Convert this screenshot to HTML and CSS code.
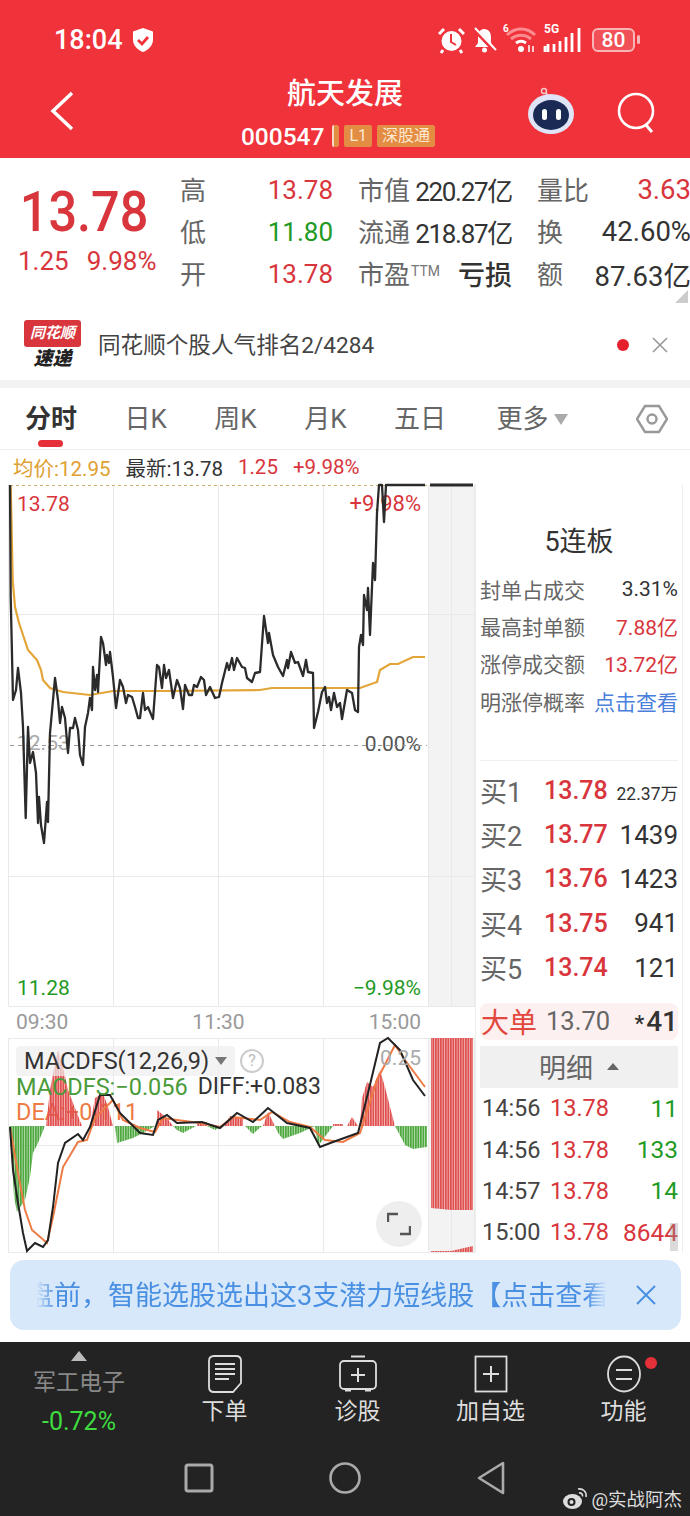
FILE: index.html
```html
<!DOCTYPE html>
<html lang="zh-CN">
<head>
  <meta charset="UTF-8">
  <meta name="viewport" content="width=device-width, initial-scale=1.0">
  <title>航天发展 000547</title>
  <link rel="stylesheet" href="styles.css">
</head>
<body>
<div class="page">

  <header class="header">
    <div class="status">
      <div class="status-left">
        <span class="clock">18:04</span>
        <svg class="shield" viewBox="0 0 24 26"><path d="M12 1l10 3.500v8c0 6-4.500 10.500-10 12.500C6.500 23 2 18.500 2 12.500v-8z" fill="#fff"/><path d="M7 13l4 4 6-7" fill="none" stroke="#f0323a" stroke-width="2.800"/></svg>
      </div>
      <div class="status-right">
        <svg class="st-icon icon-alarm" width="27" height="28" viewBox="0 0 27 28"><circle cx="13.500" cy="15" r="10" fill="#fff"/><path d="M13 8v8l5 3" fill="none" stroke="#f0323a" stroke-width="2"/><path d="M1 8l5-5M26 8l-5-5M5 24l-2 3M22 24l2 3" stroke="#fff" stroke-width="3"/></svg>
        <svg class="st-icon icon-bell" width="25" height="28" viewBox="0 0 25 28"><path d="M12 3c5 0 7 4 7 8v6l3 4H3l3-4v-6c0-4 2-8 6-8z" fill="#fff"/><circle cx="12.500" cy="24" r="2.500" fill="#fff"/><path d="M2 3l21 22" stroke="#f0323a" stroke-width="4"/><path d="M3 2l21 22" stroke="#fff" stroke-width="2"/></svg>
        <span class="wifi">
          <span class="tiny tiny-six">6</span>
          <svg width="32" height="27" viewBox="0 0 32 27"><path d="M2 9c8-8 20-8 28 0M6 13c6-5 14-5 20 0" fill="none" stroke="#fb8d90" stroke-width="3"/><path d="M11 17c3-2 7-2 10 0" fill="none" stroke="#fff" stroke-width="3"/><circle cx="16" cy="23" r="3" fill="#fff"/><path d="M24 19v7M28 20v6" stroke="#fff" stroke-width="1.500"/></svg>
        </span>
        <span class="signal">
          <span class="tiny tiny-5g">5G</span>
          <svg width="40" height="28" viewBox="0 0 40 28"><path d="M2 20v6M5 18v8M11 18v8M17 15v11M23 11v15M29 7v19M36 2v24" stroke="#fff" stroke-width="2.800"/></svg>
        </span>
        <span class="battery">80</span>
        <span class="battery-cap"></span>
      </div>
    </div>

    <div class="nav">
      <svg class="back" viewBox="0 0 26 42"><path d="M23 3L4 21l19 18" fill="none" stroke="#fff" stroke-width="3.500"/></svg>
      <div class="nav-title">
        <div class="stock-name">航天发展</div>
        <div class="stock-code">
          <span class="code">000547</span>
          <span class="tag tag-cut"></span>
          <span class="tag">L1</span>
          <span class="tag">深股通</span>
        </div>
      </div>
      <svg class="robot" viewBox="0 0 48 48"><circle cx="17" cy="4" r="2.500" fill="none" stroke="#f7c5c8" stroke-width="1.500"/><path d="M19 6l3 4" stroke="#f7c5c8" stroke-width="2"/><ellipse cx="24" cy="27" rx="23" ry="20" fill="#dfe4f7"/><ellipse cx="24" cy="28" rx="18" ry="15" fill="#1b2a55"/><rect x="15" y="22" width="5" height="11" rx="2.500" fill="#fff"/><rect x="29" y="22" width="5" height="11" rx="2.500" fill="#fff"/></svg>
      <svg class="search" viewBox="0 0 40 42"><circle cx="19" cy="19" r="17" fill="none" stroke="#fff" stroke-width="2.600"/><path d="M29 33l6 7" stroke="#fff" stroke-width="3"/></svg>
    </div>
  </header>

  <section class="quote">
    <div class="price-box">
      <div class="price">13.78</div>
      <div class="change"><span>1.25</span><span>9.98%</span></div>
    </div>
    <div class="quote-grid">
      <div class="cell"><span class="lbl">高</span><span class="red">13.78</span></div>
      <div class="cell"><span class="lbl">市值</span><span class="dark tight">220.27亿</span></div>
      <div class="cell"><span class="lbl">量比</span><span class="red big">3.63</span></div>
      <div class="cell"><span class="lbl">低</span><span class="green">11.80</span></div>
      <div class="cell"><span class="lbl">流通</span><span class="dark tight">218.87亿</span></div>
      <div class="cell"><span class="lbl">换</span><span class="dark big">42.60%</span></div>
      <div class="cell"><span class="lbl">开</span><span class="red">13.78</span></div>
      <div class="cell"><span class="lbl">市盈<sup class="ttm">TTM</sup></span><span class="dark strong">亏损</span></div>
      <div class="cell"><span class="lbl">额</span><span class="dark big">87.63亿</span></div>
    </div>
    <span class="corner"></span>
  </section>

  <section class="news">
    <div class="news-logo">
      <div class="logo-flag">同花顺</div>
      <div class="logo-sub">速递</div>
    </div>
    <div class="news-text">同花顺个股人气排名2/4284</div>
    <span class="news-dot"></span>
    <svg class="news-close" viewBox="0 0 16 16"><path d="M1 1l14 14M15 1L1 15" stroke="#999" stroke-width="1.600"/></svg>
  </section>

  <nav class="tabs">
    <span class="tab tab-on">分时</span>
    <span class="tab">日K</span>
    <span class="tab">周K</span>
    <span class="tab">月K</span>
    <span class="tab">五日</span>
    <span class="tab tab-more">更多<i class="more-arrow"></i></span>
    <svg class="gear" viewBox="0 0 32 32"><path d="M9 3h14l8 13-8 13H9L1 16z" fill="none" stroke="#999" stroke-width="2.400"/><circle cx="16" cy="16" r="4.500" fill="none" stroke="#999" stroke-width="2.400"/></svg>
  </nav>

  <div class="legend">
    <span class="avg">均价:12.95</span>
    <span class="latest">最新:13.78</span>
    <span class="red">1.25</span>
    <span class="red">+9.98%</span>
  </div>

  <main class="board">
    <div class="charts">
      <div class="chart-top">
        <span class="axis axis-tl red">13.78</span>
        <span class="axis axis-tr red">+9.98%</span>
        <span class="axis axis-ml">12.53</span>
        <span class="axis axis-mr">0.00%</span>
        <span class="axis axis-bl green">11.28</span>
        <span class="axis axis-br green">−9.98%</span>
        <svg class="chart-svg" viewBox="8 484 467 523" width="467" height="523">
          <rect x="429" y="485" width="45" height="521" fill="#f3f3f3"/>
          <path class="grid-line" d="M8.500 485v521M113.500 485v521M218.500 485v521M323.500 485v521M428.500 485v521M451.500 485v521M474.500 485v521M8 614.500h467M8 876.500h467M8 1006.500h467"/>
          <path class="dash-top" d="M10 485.500h420"/>
          <path class="dash-mid" d="M10 745.500h417"/>
          <polyline class="avg-line" points="10.700,485 12.700,580 15,607 19,623 23,635 28,650 37,660 41,670 43,680 50,688 63,692 90,695 113,691 167,691 260,690 272,688 360,688 377,682 380,670 390,664 398,664 413,657 425,657"/>
          <polyline class="price-line" points="10,485 10.700,597 13,700 16,690 18,668 21,693 23,727 25.700,818 28,727 30,763 33,752 36,773 38,823 39,797 41,825 44,843 47,802 48,822 50,733 55,678 58,700 60,723 62,707 65,718 68,753 70,728 73,728 75,718 78,730 80,755 83,765 85,727 88,713 90,698 92,710 93,667 95,690 97,675 98,692 101,637 103,643 106,665 107,655 109,663 110,652 113,677 116,708 120,680 123,687 126,703 128,695 132,697 135,707 138,718 140,718 143,693 145,710 148,707 153,719 157,665 159,667 162,688 164,665 166,678 169,670 173,698 177,680 180,688 183,709 185,685 189,695 192,695 194,685 197,687 201,677 204,680 206,695 210,687 215,698 219,697 222,683 227,663 229,670 232,658 234,670 237,658 242,667 245,668 247,678 252,682 255,673 260,672 264,616 268,643 269,633 273,655 278,667 283,676 287,660 288,668 291,652 295,663 298,662 303,676 306,660 308,672 313,673 314,728 318,712 322,692 325,687 327,703 329,697 331,710 334,693 337,707 340,703 342,719 347,690 352,693 355,710 358,712 359,647 361,635 363,645 364,595 367,610 368,588 370,635 373,563 375,580 377,513 379,485 382,485 384,522 386,485 425,485"/>
          <path class="price-end" d="M430 485h43"/>
        </svg>
      </div>
      <div class="time-axis">
        <span>09:30</span><span>11:30</span><span>15:00</span>
      </div>
      <div class="chart-macd">
        <span class="macd-dea">DEA:+0.111</span>
        <svg class="chart-svg" viewBox="8 1038 467 215" width="467" height="215">
          <defs>
            <pattern id="barsRed" width="2.500" height="10" patternUnits="userSpaceOnUse"><rect width="2" height="10" fill="#e0504f"/></pattern>
            <pattern id="barsGreen" width="2.500" height="10" patternUnits="userSpaceOnUse"><rect width="2" height="10" fill="#4ea83f"/></pattern>
          </defs>
          <rect x="429" y="1038" width="45" height="214" fill="#f3f3f3"/>
          <path class="grid-line" d="M8.500 1038v214M113.500 1038v214M218.500 1038v214M323.500 1038v214M428.500 1038v214M451.500 1038v214M474.500 1038v214M8 1038.500h467M8 1145.500h421M8 1252.500h467"/>
          <path fill="url(#barsGreen)" d="M9 1126H45L38 1143 33 1153 30 1177 25 1200 17 1212 14 1197 12 1163zM115 1126H155L143 1133 133 1138 117 1143zM173 1126H196L183 1133 177 1130zM207 1126H222L215 1130zM245 1126H262L253 1134zM275 1126H315L300 1133 283 1139 278 1133zM315 1126H333L318 1146zM405 1126H395L405 1145 413 1149 427 1147V1126z"/>
          <path fill="url(#barsRed)" d="M46 1126L50 1090 55 1063 58 1050 63 1067 68 1090 75 1108 82 1126zM90 1126L95 1098 103 1093 108 1107 113 1126zM157 1126V1110L167 1118 173 1126zM197 1126V1122H207V1126zM224 1126L230 1116 243 1118 243 1126zM263 1126L268 1112 275 1126zM333 1126H343V1124H333zM347 1126L352 1117 358 1126zM360 1126L362 1098 367 1082 373 1087 380 1070 385 1087 390 1107 395 1126z"/>
          <path fill="url(#barsRed)" d="M431 1038H473V1210L451 1210 431 1208zM431 1252V1251L451 1251 473 1246V1252z"/>
          <polyline class="dea-line" points="10,1127 18,1173 25,1210 32,1230 47,1243 53,1217 63,1167 78,1142 87,1140 95,1118 113,1100 123,1120 140,1128 155,1132 163,1118 177,1120 200,1123 220,1127 233,1117 260,1120 272,1112 290,1122 310,1127 325,1140 343,1142 360,1133 377,1080 395,1045 405,1060 425,1087"/>
          <polyline class="diff-line" points="10,1127 13,1170 18,1203 23,1233 27,1251 35,1243 43,1247 48,1240 53,1207 58,1163 65,1143 78,1134 83,1140 90,1127 100,1095 110,1095 120,1113 140,1133 153,1135 158,1120 167,1115 177,1123 202,1122 220,1128 237,1113 253,1122 268,1108 287,1123 310,1128 320,1147 333,1142 347,1137 358,1133 368,1093 380,1043 388,1038 400,1050 413,1080 425,1096"/>
        </svg>
        <div class="macd-head">
          <span class="macd-title">MACDFS(12,26,9)</span><i class="macd-arrow"></i>
        </div>
        <span class="macd-help">?</span>
        <div class="macd-values"><span class="macd-green">MACDFS:−0.056</span><span class="macd-diff">DIFF:+0.083</span></div>
        <span class="macd-scale">0.25</span>
        <span class="expand">
          <svg width="24" height="24" viewBox="0 0 24 24"><path d="M1 10V2h10M23 14v8H13" fill="none" stroke="#555" stroke-width="2.400"/></svg>
        </span>
      </div>
    </div>

    <aside class="panel">
      <div class="panel-title">5连板</div>
      <div class="stat"><span>封单占成交</span><b class="dark">3.31%</b></div>
      <div class="stat"><span>最高封单额</span><b class="red">7.88亿</b></div>
      <div class="stat"><span>涨停成交额</span><b class="red">13.72亿</b></div>
      <div class="stat"><span>明涨停概率</span><b class="blue">点击查看</b></div>
      <div class="panel-line"></div>
      <div class="buy"><span class="buy-lbl">买1</span><span class="buy-price">13.78</span><span class="buy-small">22.37万</span></div>
      <div class="buy"><span class="buy-lbl">买2</span><span class="buy-price">13.77</span><span class="buy-qty">1439</span></div>
      <div class="buy"><span class="buy-lbl">买3</span><span class="buy-price">13.76</span><span class="buy-qty">1423</span></div>
      <div class="buy"><span class="buy-lbl">买4</span><span class="buy-price">13.75</span><span class="buy-qty">941</span></div>
      <div class="buy"><span class="buy-lbl">买5</span><span class="buy-price">13.74</span><span class="buy-qty">121</span></div>
      <div class="big-order"><span class="big-lbl">大单</span><span class="big-price">13.70</span><span class="big-qty"><small>*</small>41</span></div>
      <div class="detail-head">明细<i class="detail-arrow"></i></div>
      <div class="tick"><span class="tick-time">14:56</span><span class="tick-price">13.78</span><span class="tick-qty green">11</span></div>
      <div class="tick"><span class="tick-time">14:56</span><span class="tick-price">13.78</span><span class="tick-qty green">133</span></div>
      <div class="tick"><span class="tick-time">14:57</span><span class="tick-price">13.78</span><span class="tick-qty green">14</span></div>
      <div class="tick"><span class="tick-time">15:00</span><span class="tick-price">13.78</span><span class="tick-qty red">8644</span></div>
      <span class="scrollbar"></span>
    </aside>
  </main>

  <div class="banner">
    <div class="banner-clip"><div class="banner-text">盘前，智能选股选出这3支潜力短线股【点击查看</div></div>
    <svg class="banner-close" viewBox="0 0 20 20"><path d="M1 1l18 18M19 1L1 19" stroke="#4a90e2" stroke-width="2"/></svg>
  </div>

  <footer class="bottom">
    <div class="toolbar">
      <div class="sector">
        <i class="sector-arrow"></i>
        <div class="sector-name">军工电子</div>
        <div class="sector-pct">-0.72%</div>
      </div>
      <div class="tool">
        <svg width="34" height="38" viewBox="0 0 34 38"><path d="M6 1h22q5 0 5 5v22l-8 9H6q-5 0-5-5V6q0-5 5-5z" fill="none" stroke="#ddd" stroke-width="1.800"/><path d="M7 9h20M7 14h20M7 19h20M7 24h14" stroke="#ddd" stroke-width="1.800"/></svg>
        <span>下单</span>
      </div>
      <div class="tool">
        <svg width="38" height="38" viewBox="0 0 38 38"><path d="M12 1.500h14" stroke="#ddd" stroke-width="2"/><rect x="1" y="6" width="36" height="28" rx="4" fill="none" stroke="#ddd" stroke-width="1.800"/><path d="M19 13v14M12 20h14" stroke="#ddd" stroke-width="2"/><path d="M6 35h6M26 35h6" stroke="#ddd" stroke-width="3"/></svg>
        <span>诊股</span>
      </div>
      <div class="tool">
        <svg width="34" height="38" viewBox="0 0 34 38"><rect x="1.500" y="1.500" width="31" height="35" fill="none" stroke="#ddd" stroke-width="1.800"/><path d="M17 11v16M9 19h16" stroke="#ddd" stroke-width="2"/></svg>
        <span>加自选</span>
      </div>
      <div class="tool">
        <svg width="36" height="38" viewBox="0 0 36 38"><ellipse cx="18" cy="19" rx="16" ry="17.500" fill="none" stroke="#ddd" stroke-width="1.800"/><path d="M10 15h16M10 24h16" stroke="#ddd" stroke-width="1.800"/></svg>
        <span>功能</span>
        <i class="tool-dot"></i>
      </div>
    </div>
    <div class="sys-nav">
      <svg width="30" height="30" viewBox="0 0 30 30"><rect x="2" y="2" width="26" height="26" rx="2" fill="none" stroke="#aaa" stroke-width="3"/></svg>
      <svg width="32" height="32" viewBox="0 0 32 32"><circle cx="16" cy="16" r="14.500" fill="none" stroke="#aaa" stroke-width="2.600"/></svg>
      <svg width="30" height="34" viewBox="0 0 30 34"><path d="M27 2v30L3 17z" fill="none" stroke="#aaa" stroke-width="2.600" stroke-linejoin="round"/></svg>
    </div>
    <div class="watermark">
      <svg width="27" height="24" viewBox="0 0 27 24"><ellipse cx="10.500" cy="15.500" rx="9.500" ry="7.500" fill="#ddd"/><circle cx="9.500" cy="16" r="4" fill="#232323"/><circle cx="9.500" cy="16" r="2" fill="#ddd"/><path d="M16 3c5-1 9 3 8 8M17 7c2-.500 4 1 3.500 3.500" fill="none" stroke="#ddd" stroke-width="1.600"/></svg>
      <span>@实战阿杰</span>
    </div>
  </footer>

</div>
</body>
</html>
```

FILE: styles.css
```css
* {
  box-sizing: border-box;
}

html, body {
  margin: 0;
  padding: 0;
  background: #fff;
}

.page {
  position: relative;
  width: 690px;
  height: 1516px;
  overflow: hidden;
  font-family: Roboto, "Noto Sans CJK SC", sans-serif;
  color: #333;
}

.red { color: #d8353c; }
.green { color: #1f9a24; }
.dark { color: #333; }
.blue { color: #4a7fdc; }

/* header */
.header {
  height: 158px;
  background: #f0323a;
  color: #fff;
}

.status {
  display: flex;
  justify-content: space-between;
  align-items: center;
  height: 70px;
  padding: 9px 50px 0 54px;
}

.status-left {
  display: flex;
  align-items: center;
  gap: 8px;
}

.clock {
  font-size: 27px;
  font-weight: 500;
}

.shield {
  width: 24px;
  height: 26px;
}

.status-right {
  display: flex;
  align-items: center;
}

.icon-alarm { margin-right: 7px; }
.icon-bell { margin-right: 8px; }

.wifi, .signal {
  position: relative;
  display: flex;
}

.wifi { margin-right: 6px; }
.signal { margin-right: 9px; }

.tiny {
  position: absolute;
  top: -3px;
  left: -2px;
  font-size: 10px;
  font-weight: 700;
  line-height: 12px;
}

.tiny-5g {
  top: -3px;
  left: 1px;
  font-size: 12px;
}

.battery {
  display: block;
  width: 43px;
  height: 24px;
  border: 2px solid #f9b6b9;
  border-radius: 6px;
  background: rgba(255, 255, 255, 0.15);
  font-size: 21px;
  font-weight: 500;
  line-height: 20px;
  text-align: center;
}

.battery-cap {
  display: block;
  width: 3px;
  height: 9px;
  margin-left: 2px;
  background: #f9b6b9;
  border-radius: 2px;
}

.nav {
  position: relative;
  display: flex;
  justify-content: center;
  height: 88px;
}

.nav-title {
  text-align: center;
}

.stock-name {
  height: 46px;
  padding-top: 1px;
  font-size: 29px;
  font-weight: 500;
  line-height: 46px;
}

.stock-code {
  display: flex;
  align-items: center;
  gap: 5px;
  height: 40px;
  transform: translateX(-7px);
}

.code {
  font-size: 24.500px;
  font-weight: 500;
  margin-right: 3px;
}

.tag {
  height: 22px;
  padding: 0 5px;
  background: #e38c44;
  border-radius: 2px;
  color: #fde9d0;
  font-size: 16px;
  line-height: 22px;
}

.tag-cut {
  width: 7px;
  padding: 0;
  background: linear-gradient(to right, #f6d9c0 2px, #e38c44 2px);
}

.back {
  position: absolute;
  left: 49px;
  top: 20px;
  width: 26px;
  height: 42px;
}

.robot {
  position: absolute;
  left: 527px;
  top: 17px;
  width: 48px;
  height: 48px;
}

.search {
  position: absolute;
  left: 617px;
  top: 22px;
  width: 40px;
  height: 42px;
}

/* quote */
.quote {
  position: relative;
  display: flex;
  height: 152px;
  padding: 9px 0 0 18px;
}

.price-box {
  width: 162px;
  padding-top: 11px;
  color: #d8353c;
}

.price {
  padding-left: 2px;
  font-size: 56px;
  font-weight: 500;
  line-height: 68px;
  transform: scaleX(0.9);
  transform-origin: left center;
}

.change {
  display: flex;
  gap: 18px;
  font-size: 26px;
  line-height: 30px;
}

.quote-grid {
  display: grid;
  grid-template-columns: 153px 154px 154px;
  grid-auto-rows: 42px;
  column-gap: 25px;
  width: 510px;
}

.cell {
  display: flex;
  justify-content: space-between;
  align-items: center;
  font-size: 26px;
  white-space: nowrap;
}

.cell .red, .cell .green, .cell .dark {
  padding-top: 3px;
}

.lbl {
  color: #666;
}

.tight {
  letter-spacing: -1.300px;
}

.big {
  font-size: 27.500px;
}

.ttm {
  margin-left: 1px;
  font-size: 14px;
  line-height: 0;
  vertical-align: 8px;
  color: #777;
}

.strong {
  font-size: 27px;
  font-weight: 500;
}

.corner {
  position: absolute;
  right: 2px;
  bottom: 7px;
  width: 0;
  height: 0;
  border-left: 13px solid transparent;
  border-bottom: 13px solid #ccc;
}

/* news row */
.news {
  display: flex;
  align-items: center;
  height: 78px;
  padding-left: 24px;
  border-bottom: 8px solid #f2f2f2;
}

.news-logo {
  width: 57px;
  text-align: center;
}

.logo-flag {
  height: 27px;
  background: #d8353c;
  border-radius: 3px;
  color: #fff;
  font-size: 15px;
  font-weight: 700;
  font-style: italic;
  line-height: 27px;
}

.logo-sub {
  color: #222;
  font-size: 19px;
  font-weight: 900;
  font-style: italic;
  line-height: 23px;
}

.news-text {
  margin: 0 0 3px 17px;
  font-size: 22.600px;
  color: #444;
}

.news-dot {
  width: 12px;
  height: 12px;
  margin-left: 243px;
  border-radius: 50%;
  background: #e5202c;
}

.news-close {
  width: 16px;
  height: 16px;
  margin-left: 23px;
}

/* tabs */
.tabs {
  position: relative;
  display: flex;
  align-items: center;
  gap: 47.500px;
  height: 62px;
  padding: 0 0 4px 25px;
  border-bottom: 1px solid #eee;
  font-size: 26px;
  color: #666;
}

.tab {
  position: relative;
  white-space: nowrap;
}

.tab-on {
  color: #333;
  font-weight: 700;
}

.tab-on::after {
  content: "";
  position: absolute;
  left: 13px;
  right: 14px;
  top: 42px;
  height: 7px;
  border-radius: 4px;
  background: #e5303a;
}

.tab-more { margin-left: 3px; }

.more-arrow {
  display: inline-block;
  margin-left: 5px;
  vertical-align: 3px;
  border-left: 7px solid transparent;
  border-right: 7px solid transparent;
  border-top: 11px solid #aaa;
}

.gear {
  position: absolute;
  left: 636px;
  top: 15px;
  width: 32px;
  height: 32px;
}

/* legend */
.legend {
  display: flex;
  align-items: center;
  gap: 15px;
  height: 34px;
  padding-left: 13px;
  font-size: 20.500px;
}

.avg { color: #e0a030; }
.latest { color: #333; }

/* board */
.board {
  display: flex;
  height: 769px;
}

.charts {
  width: 467px;
  margin-left: 8px;
  flex: none;
}

.chart-top {
  position: relative;
  height: 523px;
}

.chart-svg {
  position: absolute;
  left: 0;
  top: 0;
  z-index: 1;
  overflow: visible;
}

.grid-line {
  fill: none;
  stroke: #e9e9e9;
  stroke-width: 1;
}

.dash-top {
  stroke: #c9b070;
  stroke-width: 1;
  stroke-dasharray: 3 3;
}

.dash-mid {
  stroke: #999;
  stroke-width: 1;
  stroke-dasharray: 4 4;
}

.avg-line {
  fill: none;
  stroke: #e3a537;
  stroke-width: 2.200;
}

.price-line {
  fill: none;
  stroke: #2b2b2b;
  stroke-width: 2.300;
  stroke-linejoin: round;
}

.price-end {
  stroke: #2b2b2b;
  stroke-width: 3;
}

.axis {
  position: absolute;
  font-size: 21px;
  line-height: 26px;
}

.axis-tl { left: 9px; top: 7px; }
.axis-tr { right: 54px; top: 7px; font-size: 22px; }
.axis-ml { left: 9px; top: 246px; color: #aaa; }
.axis-mr { right: 54px; top: 247px; color: #555; }
.axis-bl { left: 9px; top: 491px; }
.axis-br { right: 54px; top: 491px; }

.time-axis {
  display: flex;
  justify-content: space-between;
  height: 31px;
  padding: 0 54px 0 8px;
  color: #999;
  font-size: 21px;
  line-height: 30px;
}

.chart-macd {
  position: relative;
  height: 215px;
}

.macd-dea {
  position: absolute;
  left: 8px;
  top: 61px;
  color: #ee7a44;
  font-size: 23.500px;
  line-height: 26px;
}

.diff-line {
  fill: none;
  stroke: #222;
  stroke-width: 2;
}

.dea-line {
  fill: none;
  stroke: #ee7a44;
  stroke-width: 2;
}

.macd-head {
  position: absolute;
  z-index: 2;
  left: 8px;
  top: 8px;
  display: flex;
  align-items: center;
  width: 219px;
  height: 30px;
  padding-left: 8px;
  border-radius: 4px;
  background: rgba(238, 238, 238, 0.7);
}

.macd-title {
  color: #333;
  font-size: 23.500px;
}

.macd-arrow {
  margin-left: 6px;
  border-left: 6px solid transparent;
  border-right: 6px solid transparent;
  border-top: 8px solid #777;
}

.macd-help {
  position: absolute;
  z-index: 2;
  left: 232px;
  top: 11px;
  width: 24px;
  height: 24px;
  border: 2px solid #ccc;
  border-radius: 50%;
  color: #bbb;
  font-size: 16px;
  line-height: 20px;
  text-align: center;
}

.macd-values {
  position: absolute;
  z-index: 2;
  left: 8px;
  top: 36px;
  display: flex;
  gap: 10px;
  color: #333;
  font-size: 23.500px;
  line-height: 26px;
}

.macd-green { color: #4a9a3a; }
.macd-diff { font-size: 23px; }

.macd-scale {
  position: absolute;
  z-index: 2;
  right: 54px;
  top: 7px;
  color: #aaa;
  font-size: 21px;
  line-height: 26px;
}

.expand {
  position: absolute;
  z-index: 2;
  left: 368px;
  top: 163px;
  display: flex;
  align-items: center;
  justify-content: center;
  width: 46px;
  height: 46px;
  border-radius: 50%;
  background: #eee;
}

/* right panel */
.panel {
  position: relative;
  width: 208px;
  padding: 41px 4px 0 4px;
  border-left: 1px solid #eee;
  border-right: 1px solid #eee;
}

.panel-title {
  height: 34px;
  font-size: 27px;
  line-height: 34px;
  text-align: center;
  color: #333;
}

.stat {
  display: flex;
  justify-content: space-between;
  align-items: center;
  height: 37.300px;
  font-size: 21px;
  color: #666;
  white-space: nowrap;
}

.panel-title + .stat {
  margin-top: 11px;
}

.stat b {
  font-weight: 400;
}

.panel-line {
  height: 1px;
  margin-top: 41px;
  margin-bottom: 7px;
  background: #f0f0f0;
}

.buy {
  display: flex;
  align-items: center;
  height: 44.300px;
}

.buy-lbl {
  width: 64px;
  color: #666;
  font-size: 27px;
}

.buy-price {
  color: #d8353c;
  font-size: 25px;
  font-weight: 500;
}

.buy-qty, .buy-small {
  margin-left: auto;
  color: #333;
  font-size: 26px;
}

.buy-small {
  padding-top: 4px;
  font-size: 17.500px;
}

.big-order {
  display: flex;
  align-items: center;
  height: 37px;
  margin-top: 13px;
  padding-left: 1px;
  border-radius: 8px;
  background: #fdf0f0;
}

.big-lbl {
  margin-right: 9px;
  color: #e2483d;
  font-size: 28px;
}

.big-price {
  color: #666;
  font-size: 25.500px;
}

.big-qty {
  margin-left: auto;
  color: #333;
  font-size: 28px;
  font-weight: 500;
}

.big-qty small {
  margin-right: 2px;
  font-size: 22px;
}

.detail-head {
  display: flex;
  align-items: center;
  justify-content: center;
  gap: 14px;
  height: 42px;
  margin-top: 6px;
  background: #f0f0f0;
  color: #666;
  font-size: 27px;
}

.detail-arrow {
  border-left: 6px solid transparent;
  border-right: 6px solid transparent;
  border-bottom: 7px solid #666;
}

.tick {
  display: flex;
  align-items: center;
  height: 41.300px;
  padding-left: 2px;
  font-size: 23.500px;
  white-space: nowrap;
}

.tick-time {
  width: 68px;
  color: #444;
}

.tick-price { color: #d8353c; }

.tick-qty {
  margin-left: auto;
  font-size: 24.500px;
}

.scrollbar {
  position: absolute;
  right: 4px;
  bottom: 2px;
  width: 8px;
  height: 28px;
  background: rgba(150, 150, 150, 0.35);
}

/* banner */
.banner {
  display: flex;
  align-items: center;
  width: 671px;
  height: 70px;
  margin: 7px 0 12px 10px;
  padding-left: 26px;
  border-radius: 14px;
  background: #d8e8fb;
}

.banner-clip {
  width: 571px;
  padding-bottom: 3px;
  overflow: hidden;
  -webkit-mask-image: linear-gradient(to right, transparent, #000 20px, #000 551px, transparent);
  mask-image: linear-gradient(to right, transparent, #000 20px, #000 551px, transparent);
}

.banner-text {
  margin-left: -9px;
  color: #4a90e2;
  font-size: 27px;
  white-space: nowrap;
}

.banner-close {
  width: 20px;
  height: 20px;
  margin-left: 29px;
}

/* bottom */
.bottom {
  position: relative;
  height: 174px;
  background: #232323;
}

.toolbar {
  display: grid;
  grid-template-columns: 158px 133px 133px 133px 133px;
  height: 100px;
}

.sector {
  padding-top: 9px;
  text-align: center;
}

.sector-arrow {
  display: block;
  width: 0;
  margin: 0 auto 7px;
  border-left: 8px solid transparent;
  border-right: 8px solid transparent;
  border-bottom: 10px solid #bbb;
}

.sector-name {
  color: #888;
  font-size: 23px;
  line-height: 30px;
}

.sector-pct {
  margin-top: 9px;
  color: #3fdc3f;
  font-size: 25px;
  line-height: 30px;
}

.tool {
  position: relative;
  display: flex;
  flex-direction: column;
  align-items: center;
  padding-top: 13px;
  color: #ddd;
  font-size: 23px;
}

.tool span {
  margin-top: 2px;
  line-height: 34px;
}

.tool-dot {
  position: absolute;
  left: 88px;
  top: 15px;
  width: 12px;
  height: 12px;
  border-radius: 50%;
  background: #e5303a;
}

.sys-nav {
  display: grid;
  grid-template-columns: repeat(3, 146px);
  justify-content: center;
  justify-items: center;
  align-items: center;
  height: 72px;
}

.watermark {
  position: absolute;
  right: 8px;
  bottom: 5px;
  display: flex;
  align-items: center;
  gap: 2px;
  color: #ddd;
  font-size: 18.500px;
}
```
